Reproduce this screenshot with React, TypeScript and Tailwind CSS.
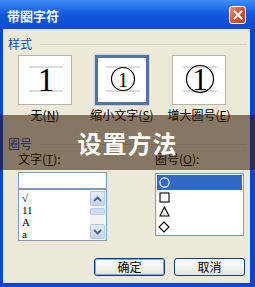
import React from "react";

const cjk = { fontFamily: '"Noto Sans CJK SC", "Noto Sans", sans-serif' };
const serif = { fontFamily: '"Liberation Serif", "Noto Sans CJK SC", serif' };

function Preview({ kind }: { kind: 0 | 1 | 2 }) {
  return (
    <svg width="48" height="44" viewBox="0 0 48 44">
      <line x1="8" y1="9" x2="42" y2="9" stroke="#b8b8b8" strokeWidth="1" />
      <line x1="8" y1="33" x2="42" y2="33" stroke="#b8b8b8" strokeWidth="1" />
      {kind === 0 && (
        <text x="25" y="33" textAnchor="middle" fontSize="33" fill="#000" style={serif}>
          1
        </text>
      )}
      {kind === 1 && (
        <>
          <circle cx="25" cy="21" r="11.5" fill="none" stroke="#000" strokeWidth="1.2" />
          <text x="25" y="28.5" textAnchor="middle" fontSize="20" fill="#000" style={serif}>
            1
          </text>
        </>
      )}
      {kind === 2 && (
        <>
          <circle cx="25" cy="21" r="13.5" fill="none" stroke="#000" strokeWidth="1.2" />
          <text x="25" y="32" textAnchor="middle" fontSize="31" fill="#000" style={serif}>
            1
          </text>
        </>
      )}
    </svg>
  );
}

function Arrow({ up }: { up: boolean }) {
  return (
    <svg width="9" height="6" viewBox="0 0 9 6">
      <path
        d={up ? "M1 5 L4.5 1.5 L8 5" : "M1 1 L4.5 4.5 L8 1"}
        fill="none"
        stroke="#4d6185"
        strokeWidth="1.8"
      />
    </svg>
  );
}

export default function App() {
  return (
    <div
      className="relative w-[255px] h-[287px] overflow-hidden bg-[#0a46d3] flex flex-col text-[12px] leading-[14px] text-black"
      style={cjk}
    >
      {/* Title bar */}
      <div className="h-[29px] shrink-0 flex items-center justify-between pl-[7px] pr-[9px] bg-gradient-to-b from-[#3c8cf8] via-[#1358dc] to-[#0b4cd4]">
        <span className="text-white font-bold text-[13px] leading-[15px] mt-[1px]">带圈字符</span>
        <div className="w-[17px] h-[18px] rounded-[3px] border border-white bg-gradient-to-br from-[#ee8a6a] via-[#d9542e] to-[#c23d1c] flex items-center justify-center">
          <svg width="10" height="10" viewBox="0 0 10 10">
            <path d="M1.5 1.5 L8.5 8.5 M8.5 1.5 L1.5 8.5" stroke="#fff" strokeWidth="2" strokeLinecap="square" />
          </svg>
        </div>
      </div>

      {/* Body */}
      <div className="flex-1 ml-[3px] mr-[5px] mb-[4px] bg-[#ece9d8] flex flex-col">
        {/* Group 样式 */}
        <div className="mt-[8px] ml-[5px] mr-[3px] h-[14px] flex items-center">
          <span className="text-[#0046d5]">样式</span>
          <div className="flex-1 h-px bg-[#d0d0bf] ml-[8px]" />
        </div>
        <div className="mt-[4px] ml-[15px] flex gap-[23px]">
          {([0, 1, 2] as const).map((k) => (
            <div key={k} className="w-[54px] flex flex-col items-center">
              <div
                className={
                  "w-[54px] h-[50px] bg-white flex items-center justify-center " +
                  (k === 1
                    ? "border-[3px] border-[#53739c] outline outline-1 outline-[#c5d3e6]"
                    : "border border-[#b4b4a8]")
                }
              >
                <Preview kind={k} />
              </div>
              <span className="mt-[3px] whitespace-nowrap">
                {k === 0 && (
                  <>
                    无(<u>N</u>)
                  </>
                )}
                {k === 1 && (
                  <>
                    缩小文字(<u>S</u>)
                  </>
                )}
                {k === 2 && (
                  <>
                    增大圈号(<u>E</u>)
                  </>
                )}
              </span>
            </div>
          ))}
        </div>

        {/* Group 圈号 */}
        <div className="mt-[15px] ml-[5px] mr-[3px] h-[14px] flex items-center">
          <span className="text-[#0046d5]">圈号</span>
          <div className="flex-1 h-px bg-[#d0d0bf] ml-[8px]" />
        </div>

        <div className="mt-[1px] flex">
          {/* Left column */}
          <div className="ml-[15px] w-[89px] flex flex-col">
            <span className="whitespace-nowrap">
              文字(<u>T</u>):
            </span>
            <div className="mt-[6px] h-[17px] bg-white border border-[#7f9db9]" />
            <div className="h-[52px] bg-white border border-[#7f9db9] flex">
              <div className="flex-1 flex flex-col pl-[3px] pt-[2px]" style={serif}>
                <span className="h-[12px] leading-[12px] text-[11px]">√</span>
                <span className="h-[12px] leading-[12px] text-[11px]">11</span>
                <span className="h-[12px] leading-[12px] text-[11px]">A</span>
                <span className="h-[12px] leading-[12px] text-[11px]">a</span>
              </div>
              <div className="w-[15px] my-[1px] mr-[1px] flex flex-col bg-[#f3f3ef]">
                <div className="h-[15px] rounded-[2px] border border-[#b6c8ea] bg-gradient-to-b from-[#e5eefd] to-[#bfd2f6] flex items-center justify-center">
                  <Arrow up />
                </div>
                <div className="mt-[2px] h-[7px] rounded-[2px] border border-[#b6c8ea] bg-[#cfdcf7]" />
                <div className="flex-1" />
                <div className="h-[15px] rounded-[2px] border border-[#b6c8ea] bg-gradient-to-b from-[#e5eefd] to-[#bfd2f6] flex items-center justify-center">
                  <Arrow up={false} />
                </div>
              </div>
            </div>
          </div>

          {/* Right column */}
          <div className="ml-[48px] w-[89px] flex flex-col">
            <span className="whitespace-nowrap">
              圈号(<u>O</u>):
            </span>
            <div className="mt-[7px] h-[63px] bg-white border border-[#7f9db9] p-[1px] flex flex-col">
              <div className="h-[15px] bg-[#316ac5] flex items-center pl-[2px]">
                <svg width="11" height="11" viewBox="0 0 11 11">
                  <circle cx="5.5" cy="5.5" r="4.6" fill="none" stroke="#fff" strokeWidth="1.1" />
                </svg>
              </div>
              <div className="h-[15px] flex items-center pl-[2px]">
                <svg width="11" height="11" viewBox="0 0 11 11">
                  <rect x="1" y="1" width="9" height="9" fill="none" stroke="#000" strokeWidth="1.1" />
                </svg>
              </div>
              <div className="h-[15px] flex items-center pl-[2px]">
                <svg width="11" height="11" viewBox="0 0 11 11">
                  <path d="M5.5 1 L10 10 L1 10 Z" fill="none" stroke="#000" strokeWidth="1.1" />
                </svg>
              </div>
              <div className="h-[15px] flex items-center pl-[1px]">
                <svg width="12" height="12" viewBox="0 0 12 12">
                  <path d="M6 1 L11 6 L6 11 L1 6 Z" fill="none" stroke="#000" strokeWidth="1.1" />
                </svg>
              </div>
            </div>
          </div>
        </div>

        {/* Buttons */}
        <div className="mt-[17px] flex justify-end gap-[9px] pr-[5px]">
          <div className="w-[71px] h-[18px] rounded-[3px] border border-[#003c74] bg-gradient-to-b from-[#ffffff] to-[#e6e5de] flex items-center justify-center outline outline-1 -outline-offset-2 outline-[#84a9e8]">
            确定
          </div>
          <div className="w-[71px] h-[18px] rounded-[3px] border border-[#003c74] bg-gradient-to-b from-[#ffffff] to-[#e6e5de] flex items-center justify-center">
            取消
          </div>
        </div>
      </div>

      {/* Overlay banner */}
      <div className="absolute left-0 right-0 top-[115px] h-[55px] bg-[rgba(50,25,0,0.55)] flex items-center justify-center">
        <span className="text-white font-bold text-[24px] leading-[26px] tracking-[1px]">设置方法</span>
      </div>
    </div>
  );
}
